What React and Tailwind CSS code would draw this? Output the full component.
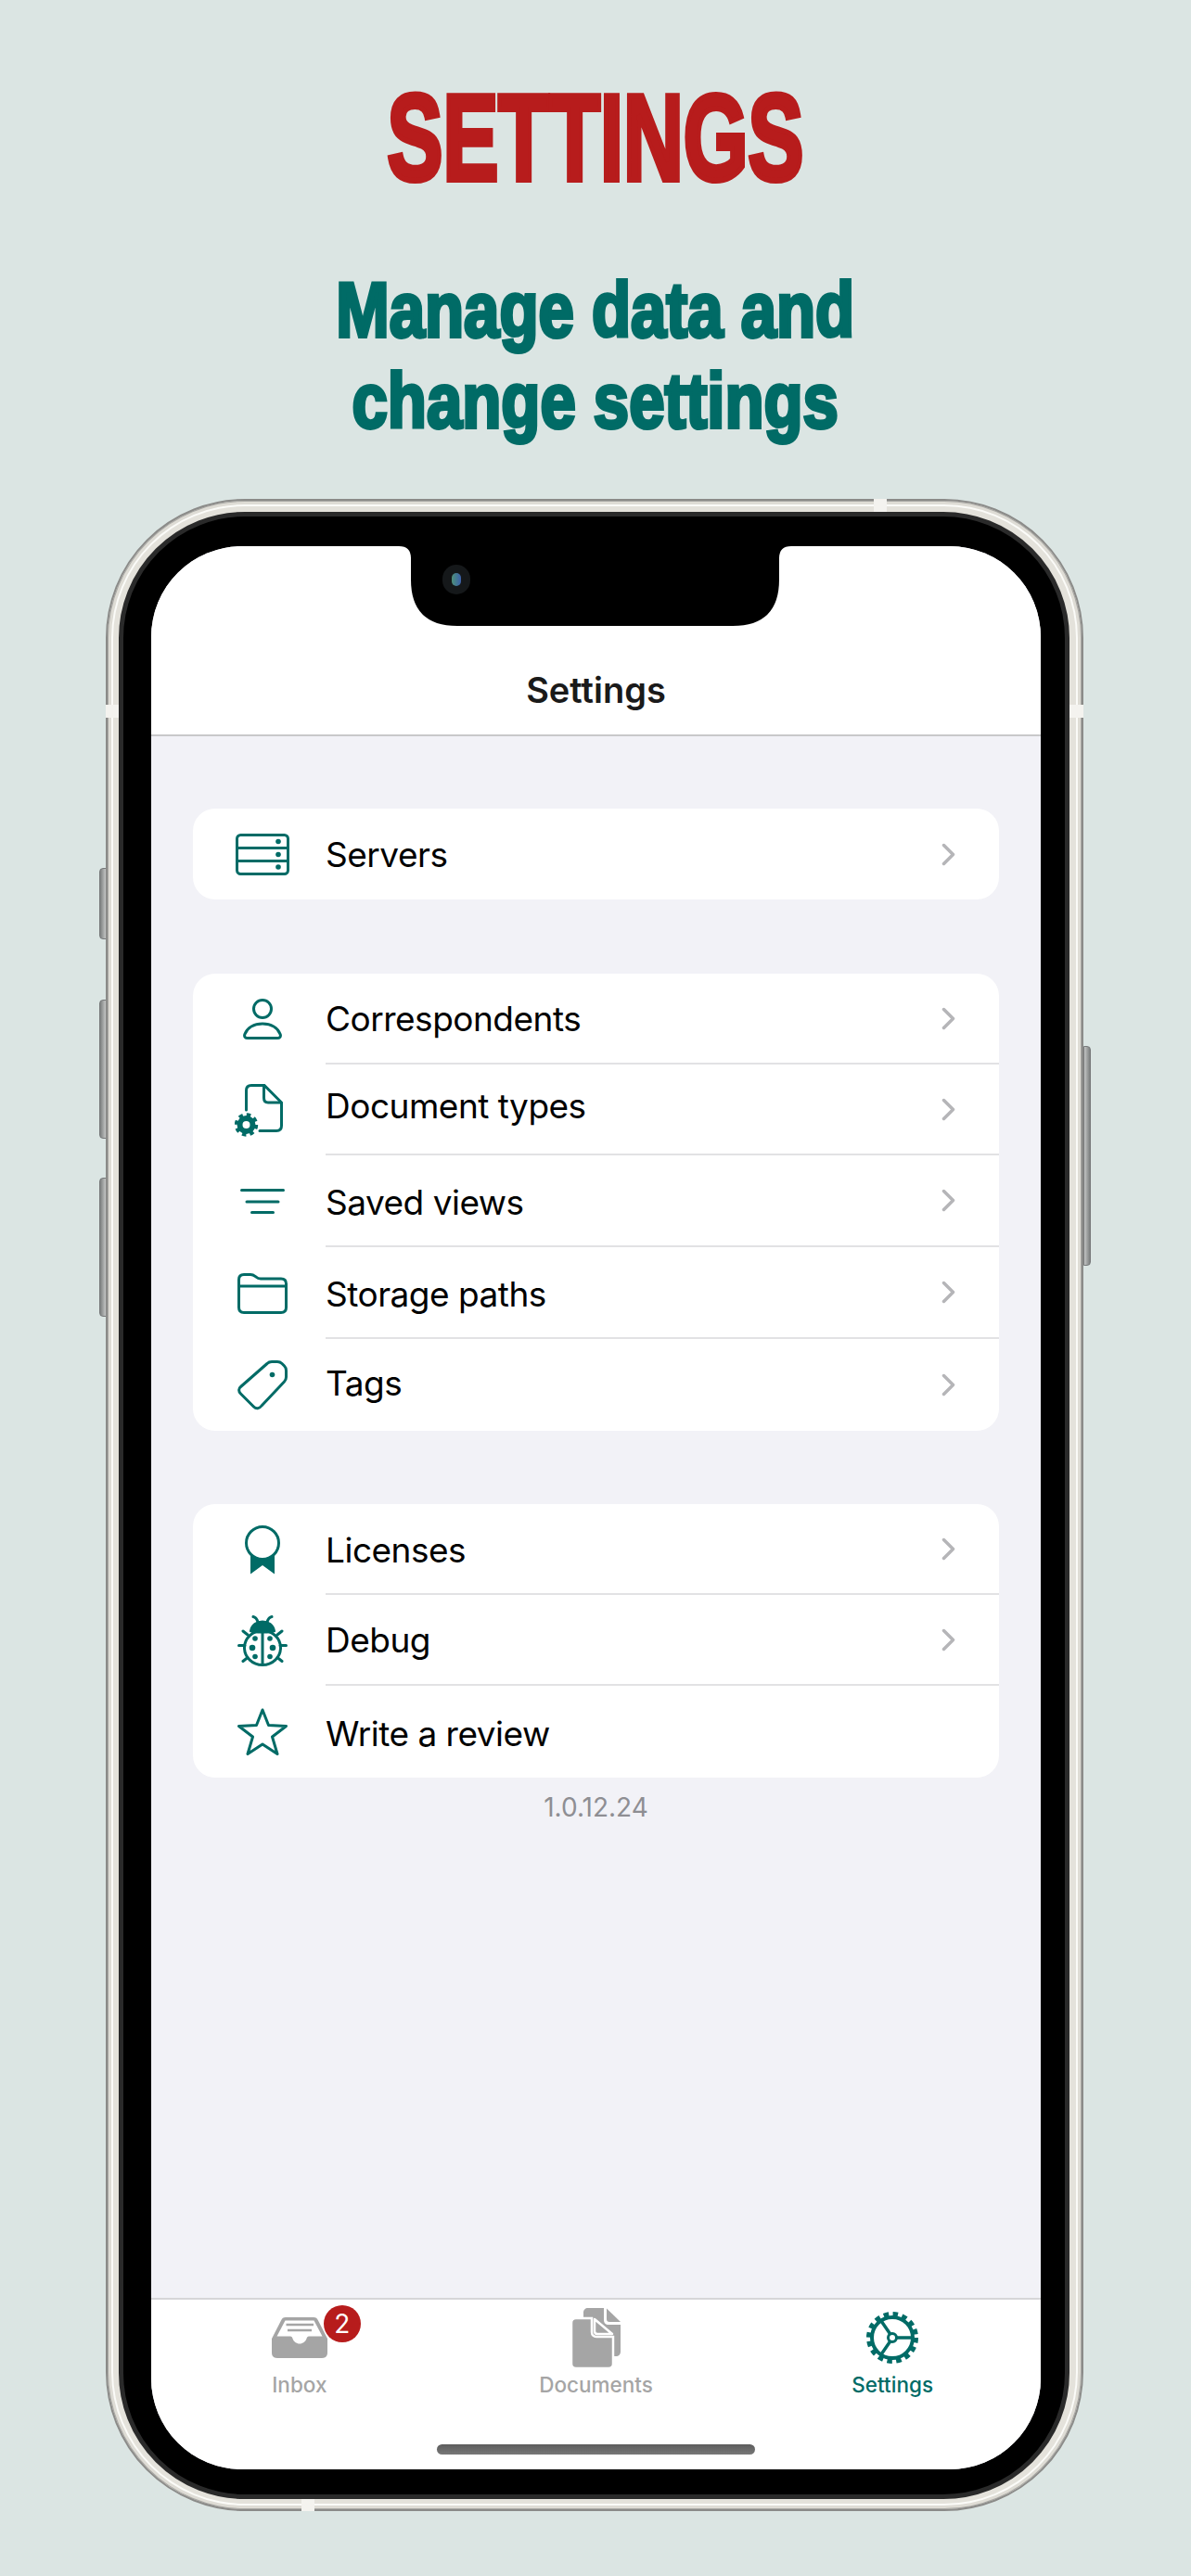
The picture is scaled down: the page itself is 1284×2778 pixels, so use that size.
const TEAL = '#006b66';

function ServerIcon() {
	return (
		<svg width="58" height="45" viewBox="0 0 58 45" fill="none" stroke={TEAL} strokeWidth="3">
			<rect x="1.5" y="1.5" width="55" height="42" rx="4" />
			<path d="M1.5 15.5H56.5M1.5 29.5H56.5" />
			<g fill={TEAL} stroke="none">
				<circle cx="46" cy="8.500" r="2.800" />
				<circle cx="46" cy="22.500" r="2.800" />
				<circle cx="46" cy="36" r="2.800" />
			</g>
		</svg>
	);
}

function PersonIcon() {
	return (
		<svg width="42" height="44" viewBox="0 0 42 44" fill="none" stroke={TEAL} strokeWidth="3">
			<circle cx="21" cy="11" r="9.500" />
			<path d="M5 42.500H37C39.500 42.500 41 41 40.200 38.500C37.500 31 30 27 21 27C12 27 4.500 31 1.800 38.500C1 41 2.500 42.500 5 42.500Z" />
		</svg>
	);
}

function DocGearIcon() {
	return (
		<svg className="mr-[9px]" width="52" height="57" viewBox="0 0 52 57" fill="none">
			<path d="M12.500 28V7C12.500 3.500 14.500 1.500 18 1.500H32L50.500 20V45C50.500 48.500 48.500 50.500 45 50.500H27" stroke={TEAL} strokeWidth="3" strokeLinecap="round" />
			<path d="M31.500 2V15C31.500 18 33 20 36 20H50" stroke={TEAL} strokeWidth="3" />
			<circle cx="12.500" cy="44" r="7" fill="none" stroke={TEAL} strokeWidth="6" />
			<circle cx="12.500" cy="44" r="10.700" fill="none" stroke={TEAL} strokeWidth="4" strokeDasharray="4.400 4" />
		</svg>
	);
}

function FilterIcon() {
	return (
		<svg width="48" height="27" viewBox="0 0 48 27" fill="none" stroke={TEAL} strokeWidth="3" strokeLinecap="round">
			<path d="M1.500 1.500H46.500M7 14H41M12.500 25.500H35.500" />
		</svg>
	);
}

function FolderIcon() {
	return (
		<svg width="54" height="44" viewBox="0 0 54 44" fill="none" stroke={TEAL} strokeWidth="3">
			<path d="M1.500 7C1.500 3.500 3.500 1.500 7 1.500H14C17 1.500 18 2.500 20 4C21.500 5.500 23 6 25 6H47C50.500 6 52.500 8 52.500 11.500V37C52.500 40.500 50.500 42.500 47 42.500H7C3.500 42.500 1.500 40.500 1.500 37Z" />
			<path d="M1.500 14H52.500" />
		</svg>
	);
}

function TagIcon() {
	return (
		<svg width="54" height="54" viewBox="0 0 54 54" fill="none" stroke={TEAL} strokeWidth="3" strokeLinejoin="round">
			<path d="M32 3.500C33.500 2 35 1.500 37 1.500H43C45 1.500 46.500 2 48 3.500L50.500 6C52 7.500 52.500 9 52.500 11V18C52.500 20 52 21.500 50.500 23L26 49C23.500 52.500 20 52.500 17.500 50L3.500 36C1 33.500 1 30.500 3.500 28.500Z" />
			<circle cx="37.500" cy="15.500" r="2.800" fill={TEAL} stroke="none" />
		</svg>
	);
}

function AwardIcon() {
	return (
		<svg width="38" height="53" viewBox="0 0 38 53" fill="none">
			<path d="M6 30V52.500L19 43L32 52.500V30Z" fill={TEAL} />
			<circle cx="19" cy="19" r="17.500" fill="#fff" stroke={TEAL} strokeWidth="3" />
		</svg>
	);
}

function BugIcon() {
	return (
		<svg width="54" height="55" viewBox="0 0 54 55" fill="none" stroke={TEAL} strokeWidth="3" strokeLinecap="round">
			<ellipse cx="27" cy="35" rx="19.500" ry="18.500" />
			<path d="M27 18V53" />
			<path d="M14 17C15 10 21 6.500 27 6.500C33 6.500 39 10 40 17C36 19 18 19 14 17Z" fill={TEAL} stroke={TEAL} strokeWidth="2" />
			<path d="M17 1.500C20 2 21 4 22 7M37 1.500C34 2 33 4 32 7M6 17L11 21M48 17L43 21M1.500 32.500H8M52.500 32.500H46M6 49.500L11 45.500M48 49.500L43 45.500" />
			<g fill={TEAL} stroke="none">
				<circle cx="19" cy="25" r="2.800" />
				<circle cx="35" cy="25" r="2.800" />
				<circle cx="16" cy="35" r="3.300" />
				<circle cx="38" cy="35" r="3.300" />
				<circle cx="19" cy="44.500" r="2.800" />
				<circle cx="35" cy="44.500" r="2.800" />
			</g>
		</svg>
	);
}

function StarIcon() {
	return (
		<svg width="54" height="51" viewBox="0 0 54 51" fill="none" stroke={TEAL} strokeWidth="3" strokeLinejoin="round">
			<path d="M27 2L33.500 18.500L52.500 19.500L37.500 31L43 49.500L27 39L11 49.500L16.500 31L1.500 19.500L20.500 18.500Z" />
		</svg>
	);
}

function Chevron() {
	return (
		<svg width="15" height="25" viewBox="0 0 15 25" fill="none" stroke="#b5b5b8" strokeWidth="3.500" strokeLinecap="round" strokeLinejoin="round">
			<path d="M2.500 2.500L12.500 12.500L2.500 22.500" />
		</svg>
	);
}

function InboxIcon() {
	return (
		<svg width="60" height="44" viewBox="0 0 60 44">
			<path d="M15 0H45C47.500 0 49 1 50 3.500L60 23V38C60 42 58 44 54 44H6C2 44 0 42 0 38V23L10 3.500C11 1 12.500 0 15 0Z" fill="#a5a5a5" />
			<path d="M14.500 3.500H45.500L54.500 20.500H40C38.500 20.500 38 21.500 37.500 23C36.500 26 33.500 28.500 30 28.500C26.500 28.500 23.500 26 22.500 23C22 21.500 21.500 20.500 20 20.500H5.500Z" fill="#fff" />
			<path d="M15.500 8H45M17 14H43" stroke="#a5a5a5" strokeWidth="2.500" />
		</svg>
	);
}

function DocumentsIcon() {
	return (
		<svg width="53" height="65" viewBox="0 0 53 65">
			<path d="M18 0H35V13C35 16 37 18 40 18H53V47C53 50 51 52 48 52H18C15 52 13 50 13 47V5C13 2 15 0 18 0Z" fill="#a5a5a5" />
			<path d="M38 0.500L53 15H41C39 15 38 14 38 12Z" fill="#a5a5a5" />
			<path d="M5 11H22V26C22 29 24 31 27 31H45V60C45 63 43 65 40 65H5C2 65 0 63 0 60V16C0 13 2 11 5 11Z" fill="#a5a5a5" stroke="#fff" strokeWidth="2.500" />
			<path d="M25 12L44 28H28C26 28 25 27 25 25Z" fill="#a5a5a5" stroke="#fff" strokeWidth="2.500" strokeLinejoin="round" />
		</svg>
	);
}

function GearIcon() {
	return (
		<svg width="56" height="56" viewBox="0 0 56 56" fill="none" stroke={TEAL}>
			<circle cx="28" cy="28" r="22" strokeWidth="4" />
			<circle cx="28" cy="28" r="25.500" strokeWidth="5" strokeDasharray="5.500 4.500" />
			<circle cx="28" cy="28" r="4.500" strokeWidth="3" />
			<path d="M32.500 28H50M25.700 32L15 47.500M25.700 24L15 8.500" strokeWidth="3.500" />
		</svg>
	);
}

const groups = [
	[{ label: 'Servers', icon: <ServerIcon />, h: 'h-[98px]', chevron: true, textClass: 'pt-[2px]' }],
	[
		{ label: 'Correspondents', icon: <PersonIcon />, h: 'h-[98px]', chevron: true, textClass: 'pt-[2px]' },
		{ label: 'Document types', icon: <DocGearIcon />, h: 'h-[98px]', chevron: true, textClass: 'pb-[6px]' },
		{ label: 'Saved views', icon: <FilterIcon />, h: 'h-[99px]', chevron: true, textClass: 'pt-[4px]' },
		{ label: 'Storage paths', icon: <FolderIcon />, h: 'h-[99px]', chevron: true, textClass: 'pt-[4px]' },
		{ label: 'Tags', icon: <TagIcon />, h: 'h-[99px]', chevron: true, textClass: 'pb-[4px]' }
	],
	[
		{ label: 'Licenses', icon: <AwardIcon />, h: 'h-[98px]', chevron: true, textClass: 'pt-[4px]' },
		{ label: 'Debug', icon: <BugIcon />, h: 'h-[98px]', chevron: true, textClass: 'pt-[2px]' },
		{ label: 'Write a review', icon: <StarIcon />, h: 'h-[99px]', chevron: false, textClass: 'pt-[4px]' }
	]
];

function Row({ item, last }) {
	return (
		<div className={`flex items-center ${item.h}`}>
			<div className="ml-[35px] mr-[28px] flex w-[80px] shrink-0 justify-center">{item.icon}</div>
			<div className={`flex h-full flex-1 items-center justify-between pr-[47px] ${last ? '' : 'border-b-2 border-[#e2e2e4]'}`}>
				<span className={`text-[37px] leading-[48px] tracking-[-0.5px] text-black ${item.textClass}`}>{item.label}</span>
				{item.chevron && <Chevron />}
			</div>
		</div>
	);
}

function Tab({ label, active, icon, badge }) {
	return (
		<div className="flex flex-col items-center pt-[8px]">
			<div className="relative flex h-[66px] items-center justify-center">
				{icon}
				{badge && (
					<span className="absolute left-[56px] top-[-2px] flex h-[40px] w-[40px] items-center justify-center rounded-full bg-[#b71c1c] text-[28px] text-white">
						{badge}
					</span>
				)}
			</div>
			<span className={`mt-[4px] text-[22.5px] font-medium leading-[28px] ${active ? 'text-[#006b66]' : 'text-[#a5a5a5]'}`}>{label}</span>
		</div>
	);
}

function SideButton({ className }) {
	return <div className={`absolute w-[8px] border border-[#77797a] bg-gradient-to-r from-[#7d8080] to-[#c3c5c4] ${className}`} />;
}

export default function App() {
	return (
		<div className="h-[2778px] w-[1284px] overflow-hidden bg-[#dbe5e3] font-['Inter',sans-serif]">
			<div className="flex h-[538px] flex-col items-center font-['Liberation_Sans',sans-serif] font-bold">
				<h1 className="mt-[79px] inline-block scale-x-[0.68] text-[132px] leading-[140px] text-[#b71c1c] [-webkit-text-stroke:6px_#b71c1c]">SETTINGS</h1>
				<div className="mt-[66px] inline-block scale-x-[0.82] text-center text-[84px] leading-[98px] text-[#006b66] [-webkit-text-stroke:4px_#006b66]">
					<div>Manage data and</div>
					<div>change settings</div>
				</div>
			</div>

			<div className="relative ml-[114px] h-[2170px] w-[1054px]">
				<SideButton className="left-[-7px] top-[398px] h-[77px] rounded-l-[4px]" />
				<SideButton className="left-[-7px] top-[540px] h-[150px] rounded-l-[4px]" />
				<SideButton className="left-[-7px] top-[732px] h-[150px] rounded-l-[4px]" />
				<SideButton className="right-[-8px] top-[590px] h-[237px] rotate-180 rounded-l-[4px]" />

				<div className="relative h-full rounded-[150px] border-2 border-[#8b8b89] bg-[#e4e2db] pb-[11px] pl-[12px] pr-[13px] pt-[12px] shadow-[inset_0_0_0_1px_#a9a8a4,inset_0_0_0_4px_#dedcd5,inset_0_0_0_6px_#fbfbf8]">
					<div className="absolute left-[-2px] top-[220px] h-[14px] w-[14px] bg-[#f4f3ef]" />
					<div className="absolute right-[-2px] top-[220px] h-[14px] w-[15px] bg-[#f4f3ef]" />
					<div className="absolute left-[826px] top-[-2px] h-[14px] w-[14px] bg-[#f4f3ef]" />
					<div className="absolute bottom-[-2px] left-[209px] h-[13px] w-[14px] bg-[#f4f3ef]" />

					<div className="h-full rounded-[136px] border-[5px] border-[#2a2a2a] bg-black pb-[27px] pl-[30px] pr-[26px] pt-[32px]">
						<div className="relative flex h-full flex-col overflow-hidden rounded-[98px] bg-[#f2f2f7]">
							<svg className="absolute left-[267px] top-0" width="423" height="86" viewBox="0 0 423 86">
								<path d="M0 0H423Q410 0 410 13V36Q410 86 360 86H63Q13 86 13 36V13Q13 0 0 0Z" fill="#000" />
							</svg>
							<div className="absolute left-[314px] top-[20px] flex h-[32px] w-[30px] items-center justify-center rounded-full bg-[#15181a]">
								<div className="h-[14px] w-[10px] rounded-full bg-gradient-to-r from-[#4f8f78] to-[#3d5fa8]" />
							</div>
							<header className="flex h-[205px] shrink-0 items-end justify-center border-b-2 border-[#c8c8ca] bg-white pb-[24px]">
								<span className="text-[38px] font-semibold leading-[48px] text-[#1a1a1a]">Settings</span>
							</header>

							<main className="flex flex-1 flex-col px-[45px] pt-[78px]">
								{groups.map((group, i) => (
									<div key={i} className={`overflow-hidden rounded-[24px] bg-white ${i === 1 ? 'mt-[80px]' : ''} ${i === 2 ? 'mt-[79px]' : ''}`}>
										{group.map((item, j) => (
											<Row key={item.label} item={item} last={j === group.length - 1} />
										))}
									</div>
								))}
								<p className="mt-[19px] text-center text-[28px] leading-[26px] text-[#8e8e93]">1.0.12.24</p>
							</main>

							<footer className="flex h-[185px] shrink-0 flex-col items-center border-t-2 border-[#d6d6d8] bg-white">
								<div className="grid w-full grid-cols-3">
									<Tab label="Inbox" icon={<InboxIcon />} badge="2" />
									<Tab label="Documents" icon={<DocumentsIcon />} />
									<Tab label="Settings" icon={<GearIcon />} active />
								</div>
								<div className="mt-[50px] h-[11px] w-[343px] rounded-full bg-gradient-to-b from-[#5c5c5c] to-[#787878]" />
							</footer>
						</div>
					</div>
				</div>
			</div>
		</div>
	);
}
